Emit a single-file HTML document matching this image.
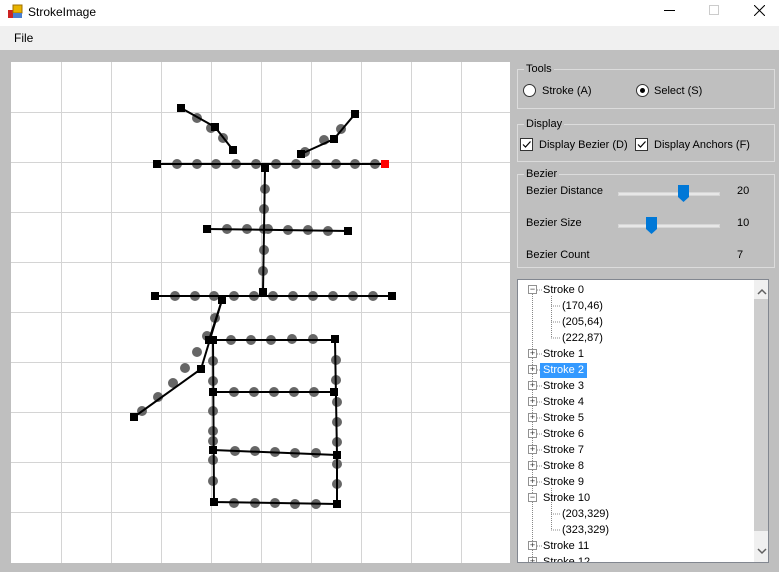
<!DOCTYPE html>
<html><head><meta charset="utf-8"><style>
*{box-sizing:border-box;margin:0;padding:0}
body{width:779px;height:572px;overflow:hidden;background:#bfbfbf;font-family:"Liberation Sans",sans-serif;font-size:11px;color:#000;position:relative}
.abs{position:absolute}
.title{left:0;top:0;width:779px;height:26px;background:#fff}
.menu{left:0;top:26px;width:779px;height:24px;background:#f0f0f0}
.grp{position:absolute;border:1px solid #dcdcdc;}
.gt{position:absolute;background:#bfbfbf;padding:0 2px;top:-8px;left:6px;line-height:14px}
.t{position:absolute;white-space:nowrap;line-height:14px}
.radio{position:absolute;width:13px;height:13px;border-radius:50%;border:1px solid #333;background:#fff}
.cb{position:absolute;width:13px;height:13px;border:1px solid #333;background:#fff}
.track{position:absolute;height:4px;background:#e7e7e7;border:1px solid #d6d6d6}
.tree{left:517px;top:279px;width:252px;height:284px;background:#fff;border:1px solid #828790;overflow:hidden}
.row{position:absolute;white-space:nowrap;line-height:15px}
.pm{position:absolute;width:9px;height:9px;border:1px solid #919191;background:#fff;font-size:9px;line-height:7px;text-align:center;color:#333}
</style></head><body>
<div class="abs title"></div>
<svg class="abs" style="left:8px;top:4px" width="16" height="16"><rect x="0" y="6" width="5" height="8" fill="#c22"/><rect x="5" y="1" width="9" height="8" fill="#e8b400" stroke="#a07000"/><rect x="5" y="9" width="9" height="5" fill="#4a7fd0"/></svg>
<div class="t" style="left:28px;top:5px;font-size:12px">StrokeImage</div>
<div class="abs" style="left:664px;top:10px;width:11px;height:1px;background:#000"></div>
<div class="abs" style="left:709px;top:5px;width:10px;height:10px;border:1px solid #ccc"></div>
<svg class="abs" style="left:754px;top:5px" width="11" height="11"><path d="M0 0L11 11M11 0L0 11" stroke="#000" stroke-width="1"/></svg>
<div class="abs menu"></div>
<div class="t" style="left:14px;top:31px;font-size:12px">File</div>

<svg class="abs" style="left:11px;top:62px" width="499" height="501" viewBox="11 62 499 501">
<rect x="11" y="62" width="499" height="501" fill="#fff"/>
<g stroke="#d4d4d4" stroke-width="1">
<path d="M61.5 62V563M111.5 62V563M161.5 62V563M211.5 62V563M261.5 62V563M311.5 62V563M361.5 62V563M411.5 62V563M461.5 62V563"/>
<path d="M11 112.5H510M11 162.5H510M11 212.5H510M11 262.5H510M11 312.5H510M11 362.5H510M11 412.5H510M11 462.5H510M11 512.5H510"/>
</g>
<g fill="#666">
<circle cx="197" cy="118" r="5"/><circle cx="211" cy="128" r="5"/><circle cx="223" cy="138" r="5"/>
<circle cx="341" cy="129" r="5"/><circle cx="324" cy="140" r="5"/><circle cx="305" cy="152" r="5"/>
<circle cx="177" cy="164" r="5"/><circle cx="197" cy="164" r="5"/><circle cx="216" cy="164" r="5"/><circle cx="236" cy="164" r="5"/><circle cx="256" cy="164" r="5"/><circle cx="276" cy="164" r="5"/><circle cx="296" cy="164" r="5"/><circle cx="316" cy="164" r="5"/><circle cx="336" cy="164" r="5"/><circle cx="355" cy="164" r="5"/><circle cx="375" cy="164" r="5"/>
<circle cx="265" cy="189" r="5"/><circle cx="264" cy="209" r="5"/><circle cx="264" cy="250" r="5"/><circle cx="263" cy="271" r="5"/>
<circle cx="227" cy="229" r="5"/><circle cx="247" cy="229" r="5"/><circle cx="264" cy="229" r="5"/><circle cx="268" cy="229" r="5"/><circle cx="288" cy="230" r="5"/><circle cx="308" cy="230" r="5"/><circle cx="328" cy="231" r="5"/>
<circle cx="175" cy="296" r="5"/><circle cx="195" cy="296" r="5"/><circle cx="214" cy="296" r="5"/><circle cx="234" cy="296" r="5"/><circle cx="254" cy="296" r="5"/><circle cx="273" cy="296" r="5"/><circle cx="293" cy="296" r="5"/><circle cx="313" cy="296" r="5"/><circle cx="333" cy="296" r="5"/><circle cx="353" cy="296" r="5"/><circle cx="373" cy="296" r="5"/>
<circle cx="215" cy="318" r="5"/><circle cx="207" cy="336" r="5"/><circle cx="197" cy="352" r="5"/><circle cx="185" cy="368" r="5"/><circle cx="173" cy="383" r="5"/><circle cx="158" cy="397" r="5"/><circle cx="142" cy="411" r="5"/>
<circle cx="231" cy="340" r="5"/><circle cx="251" cy="340" r="5"/><circle cx="271" cy="340" r="5"/><circle cx="292" cy="339" r="5"/><circle cx="313" cy="339" r="5"/>
<circle cx="234" cy="392" r="5"/><circle cx="254" cy="392" r="5"/><circle cx="274" cy="392" r="5"/><circle cx="294" cy="392" r="5"/><circle cx="314" cy="392" r="5"/>
<circle cx="235" cy="451" r="5"/><circle cx="255" cy="451" r="5"/><circle cx="275" cy="452" r="5"/><circle cx="295" cy="453" r="5"/><circle cx="316" cy="453" r="5"/>
<circle cx="234" cy="503" r="5"/><circle cx="255" cy="503" r="5"/><circle cx="275" cy="503" r="5"/><circle cx="295" cy="504" r="5"/><circle cx="316" cy="504" r="5"/>
<circle cx="213" cy="361" r="5"/><circle cx="213" cy="381" r="5"/><circle cx="213" cy="411" r="5"/><circle cx="213" cy="431" r="5"/><circle cx="213" cy="441" r="5"/><circle cx="213" cy="460" r="5"/><circle cx="213" cy="481" r="5"/>
<circle cx="336" cy="360" r="5"/><circle cx="336" cy="380" r="5"/><circle cx="337" cy="402" r="5"/><circle cx="337" cy="422" r="5"/><circle cx="337" cy="442" r="5"/><circle cx="337" cy="464" r="5"/><circle cx="337" cy="484" r="5"/>
</g>
<g stroke="#000" stroke-width="2" fill="none">
<path d="M181 108L215 127L233 150"/>
<path d="M355 114L334 139L301 154"/>
<path d="M157 164H385"/>
<path d="M265 168L263 292"/>
<path d="M207 229L348 231"/>
<path d="M155 296H392"/>
<path d="M222 300L201 369L134 417"/>
<path d="M222 300L209 340"/>
<path d="M213 340H335L337 455L337 504L214 502L213 340"/>
<path d="M213 392H334"/>
<path d="M213 450L337 455"/>
</g>
<g fill="#000">
<rect x="177" y="104" width="8" height="8"/><rect x="211" y="123" width="8" height="8"/><rect x="229" y="146" width="8" height="8"/>
<rect x="351" y="110" width="8" height="8"/><rect x="330" y="135" width="8" height="8"/><rect x="297" y="150" width="8" height="8"/>
<rect x="153" y="160" width="8" height="8"/><rect x="261" y="164" width="8" height="8"/>
<rect x="203" y="225" width="8" height="8"/><rect x="344" y="227" width="8" height="8"/>
<rect x="151" y="292" width="8" height="8"/><rect x="259" y="288" width="8" height="8"/><rect x="388" y="292" width="8" height="8"/>
<rect x="218" y="296" width="8" height="8"/><rect x="205" y="336" width="8" height="8"/><rect x="197" y="365" width="8" height="8"/><rect x="130" y="413" width="8" height="8"/>
<rect x="209" y="336" width="8" height="8"/><rect x="331" y="335" width="8" height="8"/>
<rect x="209" y="388" width="8" height="8"/><rect x="330" y="388" width="8" height="8"/>
<rect x="209" y="446" width="8" height="8"/><rect x="333" y="451" width="8" height="8"/>
<rect x="210" y="498" width="8" height="8"/><rect x="333" y="500" width="8" height="8"/>
</g>
<rect x="381" y="160" width="8" height="8" fill="#f00"/>
</svg>

<div class="grp" style="left:517px;top:69px;width:258px;height:40px"><span class="gt">Tools</span></div>
<div class="radio" style="left:523px;top:84px"></div>
<div class="t" style="left:542px;top:84px">Stroke (A)</div>
<div class="radio" style="left:636px;top:84px"><div style="position:absolute;left:3px;top:3px;width:5px;height:5px;border-radius:50%;background:#000"></div></div>
<div class="t" style="left:654px;top:84px">Select (S)</div>

<div class="grp" style="left:517px;top:124px;width:258px;height:38px"><span class="gt">Display</span></div>
<div class="cb" style="left:520px;top:138px"><svg width="11" height="11" style="position:absolute;left:0;top:0"><path d="M2 5.5L4.5 8L9.5 2.5" stroke="#000" stroke-width="1.2" fill="none"/></svg></div>
<div class="t" style="left:539px;top:138px">Display Bezier (D)</div>
<div class="cb" style="left:635px;top:138px"><svg width="11" height="11" style="position:absolute;left:0;top:0"><path d="M2 5.5L4.5 8L9.5 2.5" stroke="#000" stroke-width="1.2" fill="none"/></svg></div>
<div class="t" style="left:654px;top:138px">Display Anchors (F)</div>

<div class="grp" style="left:517px;top:174px;width:258px;height:94px"><span class="gt">Bezier</span></div>
<div class="t" style="left:526px;top:184px">Bezier Distance</div>
<div class="track" style="left:618px;top:192px;width:102px"></div>
<svg class="abs" style="left:678px;top:185px" width="12" height="18"><path d="M0 0H11V12L5.5 17L0 12Z" fill="#0078d7"/></svg>
<div class="t" style="left:737px;top:184px">20</div>
<div class="t" style="left:526px;top:216px">Bezier Size</div>
<div class="track" style="left:618px;top:224px;width:102px"></div>
<svg class="abs" style="left:646px;top:217px" width="12" height="18"><path d="M0 0H11V12L5.5 17L0 12Z" fill="#0078d7"/></svg>
<div class="t" style="left:737px;top:216px">10</div>
<div class="t" style="left:526px;top:248px">Bezier Count</div>
<div class="t" style="left:737px;top:248px">7</div>

<div class="abs tree">
<div class="abs" style="left:236px;top:0;width:15px;height:283px;background:#f0f0f0"></div>
<div class="abs" style="left:236px;top:19px;width:15px;height:232px;background:#cdcdcd"></div>
<svg class="abs" style="left:239px;top:8px" width="10" height="8"><path d="M1 6L5 2L9 6" stroke="#606060" stroke-width="1.5" fill="none"/></svg>
<svg class="abs" style="left:239px;top:267px" width="10" height="8"><path d="M1 2L5 6L9 2" stroke="#606060" stroke-width="1.5" fill="none"/></svg>
<svg class="abs" style="left:0;top:0" width="236" height="283">
<g stroke="#888" stroke-dasharray="1 1" fill="none">
<path d="M14.5 14V283"/>
<path d="M19 10H25M19 74H25M19 90H25M19 106H25M19 122H25M19 138H25M19 154H25M19 170H25M19 186H25M19 202H25M19 266H25"/>
<path d="M33.5 16V58M33 26H43M33 42H43M33 58H43"/>
<path d="M33.5 208V250M33 234H43M33 250H43"/>
</g></svg>
<div class="pm" style="left:10px;top:5px">−</div>
<div class="row" style="left:25px;top:3px">Stroke 0</div>
<div class="row" style="left:44px;top:19px">(170,46)</div>
<div class="row" style="left:44px;top:35px">(205,64)</div>
<div class="row" style="left:44px;top:51px">(222,87)</div>
<div class="pm" style="left:10px;top:69px">+</div><div class="row" style="left:25px;top:67px">Stroke 1</div>
<div class="pm" style="left:10px;top:85px">+</div><div class="row" style="left:22px;top:83px;background:#3399ff;color:#fff;padding:0 3px">Stroke 2</div>
<div class="pm" style="left:10px;top:101px">+</div><div class="row" style="left:25px;top:99px">Stroke 3</div>
<div class="pm" style="left:10px;top:117px">+</div><div class="row" style="left:25px;top:115px">Stroke 4</div>
<div class="pm" style="left:10px;top:133px">+</div><div class="row" style="left:25px;top:131px">Stroke 5</div>
<div class="pm" style="left:10px;top:149px">+</div><div class="row" style="left:25px;top:147px">Stroke 6</div>
<div class="pm" style="left:10px;top:165px">+</div><div class="row" style="left:25px;top:163px">Stroke 7</div>
<div class="pm" style="left:10px;top:181px">+</div><div class="row" style="left:25px;top:179px">Stroke 8</div>
<div class="pm" style="left:10px;top:197px">+</div><div class="row" style="left:25px;top:195px">Stroke 9</div>
<div class="pm" style="left:10px;top:213px">−</div><div class="row" style="left:25px;top:211px">Stroke 10</div>
<div class="row" style="left:44px;top:227px">(203,329)</div>
<div class="row" style="left:44px;top:243px">(323,329)</div>
<div class="pm" style="left:10px;top:261px">+</div><div class="row" style="left:25px;top:259px">Stroke 11</div>
<div class="pm" style="left:10px;top:277px">+</div><div class="row" style="left:25px;top:275px">Stroke 12</div>
</div>
</body></html>
